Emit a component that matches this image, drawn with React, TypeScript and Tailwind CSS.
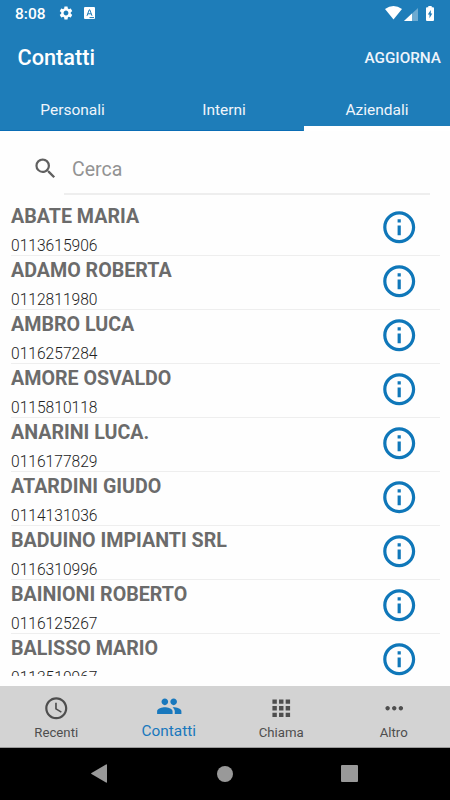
import {
  MdAccessTime,
  MdApps,
  MdInfoOutline,
  MdMoreHoriz,
  MdPeople,
  MdSearch,
  MdSettings,
} from "react-icons/md";
import clsx from "clsx";

const contacts = [
  { name: "ABATE MARIA", phone: "0113615906" },
  { name: "ADAMO ROBERTA", phone: "0112811980" },
  { name: "AMBRO LUCA", phone: "0116257284" },
  { name: "AMORE OSVALDO", phone: "0115810118" },
  { name: "ANARINI LUCA.", phone: "0116177829" },
  { name: "ATARDINI GIUDO", phone: "0114131036" },
  { name: "BADUINO IMPIANTI SRL", phone: "0116310996" },
  { name: "BAINIONI ROBERTO", phone: "0116125267" },
  { name: "BALISSO MARIO", phone: "0113510967" },
];

const tabs = ["Personali", "Interni", "Aziendali"];

const navItems = [
  { label: "Recenti", icon: MdAccessTime },
  { label: "Contatti", icon: MdPeople },
  { label: "Chiama", icon: MdApps },
  { label: "Altro", icon: MdMoreHoriz },
];

const StatusBar = () => (
  <div className="flex h-7 items-center pl-[15px] pr-[15px] text-white">
    <span className="w-[42.5px] text-[15.5px] font-medium leading-7">8:08</span>
    <MdSettings className="size-4 -translate-y-px" />
    <svg className="ml-[10.5px] h-3 w-[11px] -translate-y-px" viewBox="0 0 11 12">
      <rect width="11" height="12" rx="1" fill="#fff" />
      <path
        d="M3 8.8 5.2 2.8h.6L8 8.8M3.8 6.8h3.4M5.5 10.6H10"
        fill="none"
        stroke="#1e7db9"
        strokeWidth="1"
      />
    </svg>
    <svg className="ml-auto h-[14px] w-[17px] -translate-y-px" viewBox="0 0 17 14">
      <path d="M0 3Q8.5-3 17 3L8.5 13.5Z" fill="#fff" />
    </svg>
    <svg className="ml-[2px] h-[13px] w-[14px]" viewBox="0 0 14 13">
      <path d="M14 0v13H0Z" fill="#fff" fillOpacity=".35" />
      <path d="M8 5.5V13H0Z" fill="#fff" />
    </svg>
    <svg className="ml-[8px] mr-px h-[15px] w-[8px] -translate-y-px" viewBox="0 0 8 15">
      <path
        d="M2.3 0h3.4v1.3H7q1 0 1 1V14q0 1-1 1H1q-1 0-1-1V2.3q0-1 1-1h1.3Z"
        fill="#fff"
      />
      <path d="M4.8 4 1.8 8.6h1.7v3.6l2.8-4.7H4.8Z" fill="#1e7db9" />
    </svg>
  </div>
);

const Header = () => (
  <header className="h-[131px] shrink-0 bg-[#1e7db9] text-white">
    <StatusBar />
    <div className="flex h-[60px] items-center justify-between pl-[17.5px] pr-[9px]">
      <h1 className="text-[21.7px] font-medium">Contatti</h1>
      <button className="text-[15.3px] font-medium text-[#eef4fb]">
        AGGIORNA
      </button>
    </div>
    <div className="grid h-[43px] grid-cols-[145px_158px_147px] text-[15.5px]">
      {tabs.map((tab) => (
        <button
          key={tab}
          className={clsx(
            "border-b text-[#f0f5fb]",
            tab === "Aziendali"
              ? "ml-px border-b-[5px] border-white pt-[7px]"
              : "border-[#0a6db5] pt-[3px]",
          )}
        >
          {tab}
        </button>
      ))}
    </div>
  </header>
);

const SearchBar = () => (
  <div className="flex h-[71px] shrink-0 pl-[32px] pr-[20px] pt-[11px]">
    <MdSearch className="mt-[13px] size-[27px] text-[#606060]" />
    <div className="ml-[5px] flex h-[53px] flex-1 items-center border-b-2 border-[#eeeeee] pl-[8px]">
      <span className="pt-[4px] text-[19.5px] text-[#939393]">Cerca</span>
    </div>
  </div>
);

const ContactRow = ({ name, phone }: { name: string; phone: string }) => (
  <li className="flex h-[54px] justify-between border-b border-[#eeeeee]">
    <div>
      <p className="pt-[2px] text-[19.65px] font-bold leading-[26px] text-[#6b6b6b]">
        {name}
      </p>
      <p className="mt-[6px] text-[15.6px] font-light leading-[20px] text-[#222222]">
        {phone}
      </p>
    </div>
    <MdInfoOutline className="mr-[22px] mt-[6px] size-[38.4px] text-[#0f77b9]" />
  </li>
);

const BottomNav = () => (
  <nav className="grid h-[62px] shrink-0 grid-cols-4 border-b border-[#9a9a9a] bg-[#d3d3d3]">
    {navItems.map(({ label, icon: Icon }) => {
      const active = label === "Contatti";
      return (
        <button
          key={label}
          className={clsx(
            "flex flex-col items-center",
            active ? "pt-[7px] text-[#1878bd]" : "pt-[9px] text-[#4e4e4e]",
          )}
        >
          <Icon className="size-[26.5px]" />
          <span
            className={
              active ? "text-[15.4px] leading-[23px]" : "text-[13.2px] leading-[21px]"
            }
          >
            {label}
          </span>
        </button>
      );
    })}
  </nav>
);

const SystemBar = () => (
  <div className="flex h-[52px] shrink-0 items-center justify-between bg-black pb-px pl-[91px] pr-[92px]">
    <svg className="h-[19px] w-4" viewBox="0 0 16 19">
      <path d="M15 .5q1-.5 1 .5v17q0 1-1 .5L.5 10q-.8-.5 0-1Z" fill="#999" />
    </svg>
    <div className="ml-[1px] size-4 rounded-full bg-[#999999]" />
    <div className="size-[17px] rounded-[1px] bg-[#999999]" />
  </div>
);

export default function App() {
  return (
    <div className="flex h-[800px] w-[450px] flex-col overflow-hidden bg-[#fefefe] font-['Roboto',sans-serif]">
      <Header />
      <SearchBar />
      <ul className="mb-[10px] h-[474px] shrink-0 overflow-hidden pl-[11px] pr-[10px]">
        {contacts.map((contact) => (
          <ContactRow key={contact.name} {...contact} />
        ))}
      </ul>
      <BottomNav />
      <SystemBar />
    </div>
  );
}
